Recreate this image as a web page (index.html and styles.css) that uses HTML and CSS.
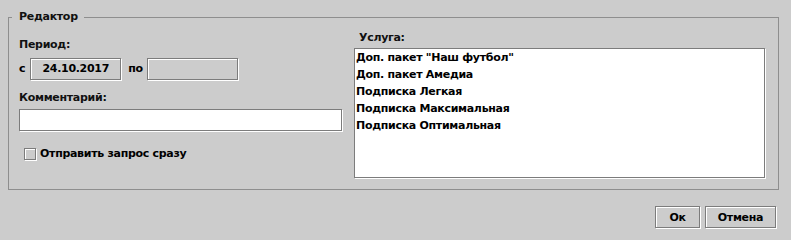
FILE: index.html
```html
<!DOCTYPE html>
<html lang="ru">
<head>
<meta charset="utf-8">
<link rel="stylesheet" href="styles.css">
</head>
<body>
<div class="dialog">
  <fieldset class="group">
    <legend class="group-title">Редактор</legend>
    <div class="group-body">
      <div class="col-left">
        <div class="label label-period">Период:</div>
        <div class="period-row">
          <span class="small-label">с</span>
          <div class="field field-date">24.10.2017</div>
          <span class="small-label">по</span>
          <div class="field field-date"></div>
        </div>
        <div class="label label-comment">Комментарий:</div>
        <div class="field field-comment"></div>
        <div class="check-row">
          <span class="checkbox"></span>
          <span class="check-label">Отправить запрос сразу</span>
        </div>
      </div>
      <div class="col-right">
        <div class="label label-service">Услуга:</div>
        <ul class="list">
          <li>Доп. пакет "Наш футбол"</li>
          <li>Доп. пакет Амедиа</li>
          <li>Подписка Легкая</li>
          <li>Подписка Максимальная</li>
          <li>Подписка Оптимальная</li>
        </ul>
      </div>
    </div>
  </fieldset>
  <div class="buttons">
    <button class="btn btn-ok">Ок</button>
    <button class="btn btn-cancel">Отмена</button>
  </div>
</div>
</body>
</html>
```

FILE: styles.css
```css
html, body {
  margin: 0;
  padding: 0;
  background: #cccccc;
}
body {
  font-family: "DejaVu Sans", "Liberation Sans", sans-serif;
  font-weight: bold;
  font-size: 11px;
  line-height: 14px;
  letter-spacing: -0.3px;
  color: #000;
  width: 791px;
  height: 240px;
  overflow: hidden;
}
.dialog {
  padding: 10px 12px 0 8px;
}
.group {
  margin: 0;
  padding: 0;
  border: 1px solid #8e8e8e;
  height: 180px;
  box-sizing: border-box;
  min-width: 0;
}
.group-title {
  margin-left: 3px;
  padding: 0 6px 0 7px;
  line-height: 14px;
  color: #111;
}
.group-body {
  display: flex;
  padding-left: 10px;
  padding-right: 11px;
}
.col-left {
  width: 325px;
  display: flex;
  flex-direction: column;
}
.col-right {
  margin-left: 10px;
  flex: 1;
  display: flex;
  flex-direction: column;
}
.label {
  color: #111;
}
.label-period {
  margin-top: 14px;
}
.period-row {
  display: flex;
  align-items: center;
  margin-top: 5px;
  height: 23px;
}
.small-label {
  margin-right: 5px;
}
.small-label + .field-date + .small-label {
  margin-left: 7px;
  margin-right: 4px;
}
.field {
  border: 1px solid #7c7c7c;
  box-shadow: 1px 1px 0 #fff, inset 1px 1px 0 #fff;
  box-sizing: border-box;
}
.field-date {
  width: 91px;
  height: 22px;
  background: #cccccc;
  text-align: center;
  line-height: 20px;
  font-weight: bold;
}
.label-comment {
  margin-top: 11px;
}
.field-comment {
  margin-top: 4px;
  width: 323px;
  height: 22px;
  background: #fff;
}
.check-row {
  display: flex;
  align-items: center;
  margin-top: 16px;
  margin-left: 5px;
}
.checkbox {
  display: inline-block;
  width: 12px;
  height: 12px;
  border: 1px solid #7c7c7c;
  box-shadow: 1px 1px 0 #fff, inset 1px 1px 0 #fff;
  box-sizing: border-box;
  background: #cccccc;
  margin-right: 4px;
}
.label-service {
  margin-top: 7px;
  padding-left: 5px;
}
.list {
  list-style: none;
  margin: 3px 0 0 0;
  padding: 0 0 0 1px;
  width: 411px;
  height: 130px;
  box-sizing: border-box;
  background: #fff;
  border: 1px solid #7c7c7c;
  box-shadow: 1px 1px 0 #fff;
}
.list li {
  line-height: 17px;
  height: 17px;
  white-space: nowrap;
}
.buttons {
  display: flex;
  justify-content: flex-end;
  gap: 5px;
  margin-top: 16px;
  padding-right: 3px;
}
.btn {
  font-family: inherit;
  font-size: 11px;
  font-weight: bold;
  letter-spacing: -0.3px;
  color: #000;
  background: #cccccc;
  border: 1px solid #7c7c7c;
  box-shadow: 1px 1px 0 #fff, inset 1px 1px 0 #fff;
  height: 22px;
  padding: 0;
  margin: 0;
  border-radius: 0;
}
.btn-ok {
  width: 45px;
}
.btn-cancel {
  width: 71px;
}
```
